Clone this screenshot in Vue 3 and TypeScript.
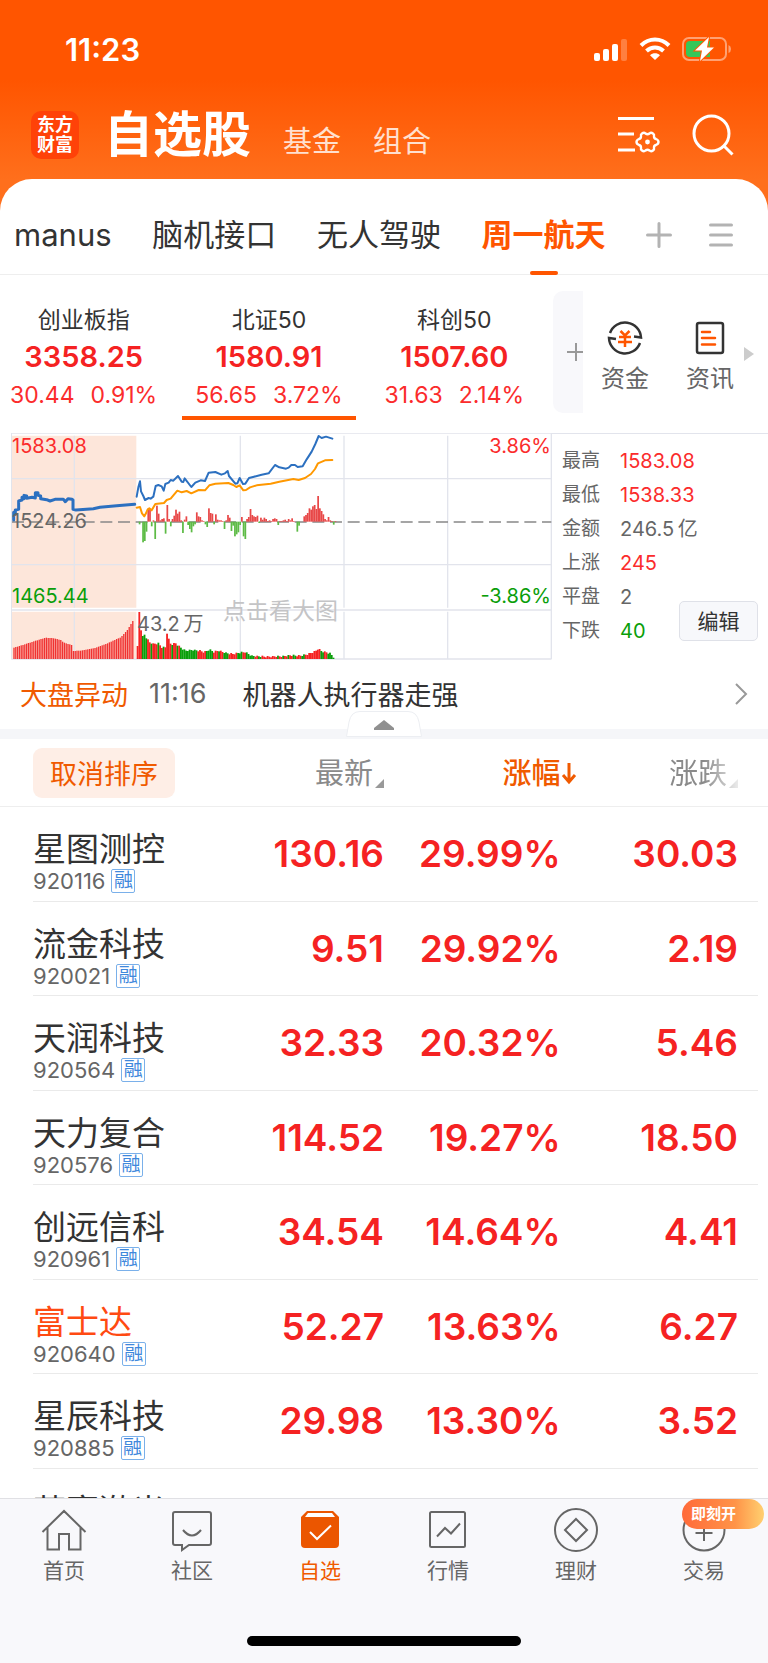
<script setup lang="ts">
import { computed, ref } from 'vue'

interface Stock { name: string; code: string; price: string; pct: string; diff: string; hot?: boolean }
type Point = [number, number]

const groups = ['manus', '脑机接口', '无人驾驶', '周一航天']
const activeGroup = ref('周一航天')

const indices = [
  { name: '创业板指', value: '3358.25', diff: '30.44', pct: '0.91%' },
  { name: '北证50', value: '1580.91', diff: '56.65', pct: '3.72%' },
  { name: '科创50', value: '1507.60', diff: '31.63', pct: '2.14%' },
]
const activeIndex = ref('北证50')

const stats = [
  { label: '最高', value: '1583.08', tone: 'up' },
  { label: '最低', value: '1538.33', tone: 'up' },
  { label: '金额', value: '246.5\u2009亿', tone: 'flat' },
  { label: '上涨', value: '245', tone: 'up' },
  { label: '平盘', value: '2', tone: 'flat' },
  { label: '下跌', value: '40', tone: 'down' },
]

const stocks: Stock[] = [
  { name: '星图测控', code: '920116', price: '130.16', pct: '29.99%', diff: '30.03' },
  { name: '流金科技', code: '920021', price: '9.51', pct: '29.92%', diff: '2.19' },
  { name: '天润科技', code: '920564', price: '32.33', pct: '20.32%', diff: '5.46' },
  { name: '天力复合', code: '920576', price: '114.52', pct: '19.27%', diff: '18.50' },
  { name: '创远信科', code: '920961', price: '34.54', pct: '14.64%', diff: '4.41' },
  { name: '富士达', code: '920640', price: '52.27', pct: '13.63%', diff: '6.27', hot: true },
  { name: '星辰科技', code: '920885', price: '29.98', pct: '13.30%', diff: '3.52' },
  { name: '莱赛激光', code: '', price: '', pct: '', diff: '' },
]

const tabs = ['首页', '社区', '自选', '行情', '理财', '交易']
const activeTab = ref('自选')

function sample(curve: Point[], x: number): number {
  for (let i = 1; i < curve.length; i++) {
    const [x0, y0] = curve[i - 1]
    const [x1, y1] = curve[i]
    if (x <= x1) return y0 + ((y1 - y0) * (x - x0)) / (x1 - x0)
  }
  return curve[curve.length - 1][1]
}

const auctionVolume: Point[] = [[40, 683], [75, 672], [100, 664], [135, 653], [160, 655], [180, 660], [190, 668], [213, 675], [217, 693], [240, 692], [280, 685], [320, 670], [360, 652], [380, 630], [397, 602]]
const tradeVolume: Point[] = [[412, 678], [417, 572], [422, 625], [428, 650], [433, 642], [437, 650], [448, 665], [460, 670], [475, 668], [485, 680], [496, 680], [500, 635], [505, 655], [512, 672], [526, 668], [540, 680], [555, 690], [575, 688], [600, 690], [612, 695], [628, 686], [640, 694], [655, 690], [680, 698], [700, 700], [720, 696], [735, 694], [745, 700], [755, 706], [800, 708], [845, 707], [870, 704], [900, 705], [925, 700], [945, 692], [954, 684], [965, 692], [990, 698], [1002, 712]]
const tradeColors = 'rrrgggrrgrrrgrrgrrrrgrrgrggggggggggrrrrrggggrrrgrrgggrrrrrgggrrgggggrrggrrrrrrrrrgrrgrrgrrggrrrggrrrrrrrrrggrrggggggg'

const auctionBars = computed(() =>
  Array.from({ length: 67 }, (_, i) => {
    const x = 40 + i * 5.4
    const y = Math.round(sample(auctionVolume, x))
    return { x, y, h: 717 - y }
  }),
)
const tradeBars = computed(() =>
  Array.from({ length: 114 }, (_, i) => {
    const x = 412 + i * 5.2
    const y = Math.round(sample(tradeVolume, x) + (i % 3) * 2)
    return { x: x - 2, y, h: 717 - y, up: tradeColors[i] === 'r' }
  }),
)

const momentum = [
  0, -8, 0, -62, -58, -30, 40, 38, -14, 4, -52, 48, 24, 4, 8, 10, -36, 50, 8, -14, 8, 18, 36, 24, 30, 4, -34, 6, 16, -10,
  -22, -32, -14, -8, 28, 16, 14, 4, 2, -8, -16, 40, 26, 24, -8, 22, 6, 4, 4, 2, -22, 4, 20, 12, -28, -12, -44, -38, -32,
  -10, 14, -44, -52, 8, 14, 38, 20, 16, 14, 18, -4, 12, 6, 12, 8, 2, 4, 2, 8, 10, 8, -10, 2, 2, 4, 6, 2, 8, 4, 10, 2, 0,
  -30, -12, 0, 0, 16, 20, 26, 40, 36, 46, 50, 38, 77, 40, 32, 22, 8, 4, 14, 4, 2, -9, 2,
]
</script>

<template>
  <div class="app">
    <header class="top">
      <div class="status">
        <span class="clock">11:23</span>
        <span class="status-icons">
          <svg width="34" height="24" viewBox="0 0 34 24" fill="#fff" aria-hidden="true">
            <rect x="0" y="16" width="6" height="8" rx="2" /><rect x="9" y="12" width="6" height="12" rx="2" />
            <rect x="18" y="7" width="6" height="17" rx="2" /><rect x="27" y="2" width="6" height="22" rx="2" opacity=".25" />
          </svg>
          <svg width="32" height="24" viewBox="0 0 32 24" fill="none" stroke="#fff" stroke-width="4" aria-hidden="true">
            <path d="M2 8.5C10 .5 22 .5 30 8.5M7.500 14C12.500 9.300 19.500 9.300 24.500 14" /><path d="M11 18.200C14 15.700 18 15.700 21 18.200L16 23Z" fill="#fff" stroke="none" />
          </svg>
          <svg width="50" height="26" viewBox="0 0 50 26" fill="none" aria-hidden="true">
            <rect x="1" y="2" width="43" height="22" rx="6" stroke="#fff" stroke-opacity=".45" stroke-width="2" />
            <path d="M46.500 9Q49 10 49 13Q49 16 46.500 17Z" fill="#fff" fill-opacity=".45" />
            <path d="M8 5H28V21H8Q4 21 4 17V9Q4 5 8 5Z" fill="#35c759" />
            <path d="M27 1L13 14.500H20L18 25L32 11.500H25Z" fill="#fff" stroke="#ff5a04" stroke-width="2" paint-order="stroke" />
          </svg>
        </span>
      </div>
      <div class="titlebar">
        <div class="logo"><span>东方</span><span>财富</span></div>
        <nav class="sections">
          <h1>自选股</h1>
          <a href="#fund">基金</a>
          <a href="#portfolio">组合</a>
        </nav>
        <button class="icon-btn" aria-label="设置">
          <svg width="42" height="40" viewBox="0 0 42 40" fill="none" stroke="#fff" stroke-width="3">
            <path d="M0 3.500H36M0 19H16M0 35H17" />
            <path d="M24 18.500Q26 17 27.500 18.500Q29.500 20 31.500 18.500Q33 17 35 18.500Q36.500 19.500 36 21.500Q36 23.500 38 24Q40.500 25 40.500 27Q40.500 29 38 30Q36 30.500 36 32.500Q36.500 34.500 35 35.500Q33 37 31.500 35.500Q29.500 34 27.500 35.500Q26 37 24 35.500Q22.500 34.500 23 32.500Q23 30.500 21 30Q18.500 29 18.500 27Q18.500 25 21 24Q23 23.500 23 21.500Q22.500 19.500 24 18.500Z" stroke-width="2.400" />
            <circle cx="29.500" cy="27" r="2.400" fill="#fff" stroke="none" />
          </svg>
        </button>
        <button class="icon-btn" aria-label="搜索">
          <svg width="42" height="42" viewBox="0 0 42 42" fill="none" stroke="#fff" stroke-width="3">
            <circle cx="19.500" cy="19.500" r="17.500" /><path d="M32 32L40.500 40.500" />
          </svg>
        </button>
      </div>
    </header>

    <main class="panel">
      <nav class="groups">
        <button v-for="g in groups" :key="g" class="group" :class="{ active: g === activeGroup }" @click="activeGroup = g">{{ g }}</button>
        <button class="group-tool" aria-label="添加分组">
          <svg width="26" height="26" viewBox="0 0 26 26" stroke="#b3b3b3" stroke-width="3" stroke-linecap="round"><path d="M1.500 13H24.500M13 1.500V24.500" /></svg>
        </button>
        <button class="group-tool" aria-label="分组列表">
          <svg width="24" height="26" viewBox="0 0 24 26" stroke="#b3b3b3" stroke-width="3" stroke-linecap="round"><path d="M1.500 3H22.500M1.500 13H22.500M1.500 23H22.500" /></svg>
        </button>
      </nav>

      <section class="indices">
        <div class="index-strip">
          <button v-for="i in indices" :key="i.name" class="index" :class="{ active: i.name === activeIndex }" @click="activeIndex = i.name">
            <span class="index-name">{{ i.name }}</span>
            <strong>{{ i.value }}</strong>
            <span class="index-change"><span>{{ i.diff }}</span><span>{{ i.pct }}</span></span>
          </button>
          <button class="index-add" aria-label="添加指数">
            <svg width="16" height="20" viewBox="0 0 16 20" stroke="#999" stroke-width="2"><path d="M0 10H18M9 1V19" /></svg>
          </button>
        </div>
        <a class="quick" href="#capital">
          <svg width="36" height="36" viewBox="0 0 36 36" fill="none" stroke="#333" stroke-width="2.500">
            <path d="M3 13A16 16 0 0 1 34 17.500L27 16.500M33 23A16 16 0 0 1 2 18L9 19" />
            <path d="M13.500 11L18 15.500L22.500 11M12 17H24M11 22H25M18 15.500V27" stroke="#ff5500" />
          </svg>
          <span>资金</span>
        </a>
        <a class="quick" href="#news">
          <svg width="30" height="36" viewBox="0 0 30 36" fill="none" stroke="#333" stroke-width="2.500">
            <rect x="2" y="3" width="26" height="30" rx="2" />
            <path d="M7 12H15M7 18H20M7 24.500H20" stroke="#ff5500" stroke-linecap="round" />
          </svg>
          <span>资讯</span>
        </a>
        <svg class="more" width="10" height="14" viewBox="0 0 10 14" fill="#ccc" aria-hidden="true"><path d="M0 0L10 7L0 14Z" /></svg>
      </section>

      <section class="market">
        <svg class="chart" viewBox="0 0 541 227" role="img" aria-label="北证50 分时图">
          <g transform="translate(-11 -13) scale(.333333)">
            <path d="M36 47H409V563H36ZM36 575H409V716H36Z" fill="#fde6da" />
            <path d="M34 39V718M223 47V563M223 575V716M721 47V563M721 575V716M1032 47V563M1032 575V716M1343 47V563M1343 575V716M1654 39V718M34 176H1654M34 434H1654M34 570H1654M34 717H1654M34 39H1654" fill="none" stroke="#e2e4ec" stroke-width="4" />
            <path d="M36 306H1654" stroke="#888" stroke-width="4" stroke-dasharray="36 17" />
            <rect v-for="(b, i) in auctionBars" :key="'a' + i" :x="b.x" :y="b.y" width="4" :height="b.h" fill="#f03232" />
            <rect v-for="(b, i) in tradeBars" :key="'t' + i" :x="b.x" :y="b.y" width="5.500" :height="b.h" :fill="b.up ? '#f52222' : '#0a9e0a'" />
            <rect v-for="(m, i) in momentum" :key="'m' + i" :x="411 + i * 5.200" :y="m > 0 ? 305 - m : 305" width="5.200" :height="Math.abs(m)" :fill="m > 0 ? '#e84848' : '#5dbb46'" />
            <g fill="none" stroke-linejoin="round" stroke-linecap="round">
              <path stroke="#2c70c0" stroke-width="9" d="M41 300V277L46 283V270L56 268V243L66 240V232L72 236V226L80 228V235L96 232L106 234V218L114 218V226L122 228V236L140 239L150 243L165 238L190 238L196 245L204 236L216 238L219 240V268L228 270L280 266L300 262L350 257L404 253" />
              <path stroke="#2c70c0" stroke-width="6" d="M410 230L415 202L420 184L423 214L430 228L435 240L446 234L452 236L460 230L467 198L475 195L485 199L491 212L496 192L506 188L512 180L520 182L534 168L545 185L550 186L554 175L574 201L586 188L602 181L615 183L626 158L646 156L664 164L675 160L683 153L687 168L706 191L712 190L719 174L729 192L736 191L747 174L762 170L785 164L806 160L825 135L838 142L858 146L866 143L874 135L885 135L893 141L908 139L920 118L935 95L946 72L956 48L965 54L978 50L997 56" />
              <path stroke="#ff9800" stroke-width="6" d="M410 263L420 261L426 280L433 289L438 280L442 270L448 265L455 271L466 252L492 249L500 240L512 236L532 212L545 217L560 213L574 220L596 210L615 211L628 196L646 191L685 189L700 195L709 201L719 196L730 211L738 210L750 202L770 196L812 191L838 185L880 177L896 180L915 174L933 162L945 147L954 130L975 121L997 120" />
            </g>
          </g>
          <text x="1" y="20" class="up">1583.08</text>
          <text x="1" y="95" class="flat">1524.26</text>
          <text x="1" y="170" class="down">1465.44</text>
          <text x="540" y="20" text-anchor="end" class="up">3.86%</text>
          <text x="540" y="170" text-anchor="end" class="down">-3.86%</text>
          <text x="126" y="198" class="flat">43.2&#8201;万</text>
          <text x="212" y="186" class="hint">点击看大图</text>
        </svg>
        <aside class="stats">
          <dl>
            <div v-for="s in stats" :key="s.label"><dt>{{ s.label }}</dt><dd :class="s.tone">{{ s.value }}</dd></div>
          </dl>
          <button class="edit">编辑</button>
        </aside>
      </section>

      <a class="news" href="#move">
        <span class="news-tag">大盘异动</span>
        <time>11:16</time>
        <span class="news-title">机器人执行器走强</span>
        <svg width="14" height="24" viewBox="0 0 14 24" fill="none" stroke="#999" stroke-width="2"><path d="M2 2L12 12L2 22" /></svg>
      </a>
      <div class="divider">
        <button class="collapse" aria-label="收起">
          <svg width="76" height="26" viewBox="0 0 76 26"><path d="M0.500 25.500L3 11Q5 .5 14 .5H62Q71 .5 73 11L75.500 25.500Z" fill="#fff" stroke="#eceef2" /><path d="M38 9L48 17V19H28V17Z" fill="#909090" /></svg>
        </button>
      </div>

      <section class="list">
        <table>
          <colgroup><col class="c-name"><col class="c-price"><col class="c-pct"><col class="c-diff"></colgroup>
          <thead>
            <tr>
              <th class="name"><button class="reset">取消排序</button></th>
              <th><button class="sort">最新<svg width="9" height="9" viewBox="0 0 9 9" fill="#999"><path d="M9 0V9H0Z" /></svg></button></th>
              <th><button class="sort on">涨幅<svg width="16" height="24" viewBox="0 0 16 24" fill="none" stroke="#f05a00" stroke-width="3"><path d="M8 1V20M2 13L8 20L14 13" /></svg></button></th>
              <th><button class="sort fade">涨跌<svg width="9" height="9" viewBox="0 0 9 9" fill="#999"><path d="M9 0V9H0Z" /></svg></button></th>
            </tr>
          </thead>
          <tbody>
            <tr v-for="s in stocks" :key="s.name">
              <td class="name">
                <div class="stock" :class="{ hot: s.hot }">{{ s.name }}</div>
                <div v-if="s.code" class="code">{{ s.code }}<span class="margin">融</span></div>
              </td>
              <td>{{ s.price }}</td>
              <td>{{ s.pct }}</td>
              <td>{{ s.diff }}</td>
            </tr>
          </tbody>
        </table>
      </section>
    </main>

    <footer class="bottom">
      <nav class="tabbar">
        <a v-for="t in tabs" :key="t" :href="'#' + t" :class="{ active: t === activeTab }" @click="activeTab = t">
          <svg width="46" height="46" viewBox="0 0 46 46" fill="none" stroke="#666" stroke-width="2" aria-hidden="true">
            <path v-if="t === '首页'" d="M1.500 24L23 3L44.500 24M6.500 19.500V41.500H18V26H28V41.500H39.500V19.500" />
            <g v-else-if="t === '社区'"><path d="M6 4H40Q42 4 42 6V35Q42 37 40 37H20L13 42V37H6Q4 37 4 35V6Q4 4 6 4Z" /><path d="M14 22Q23 33 32 22" /></g>
            <g v-else-if="t === '自选'"><path d="M10 3H36L42 9V36Q42 40 38 40H8Q4 40 4 36V9Z" fill="#eb5600" stroke="none" /><path d="M11 5H35L38 9H8Z" fill="#fff" stroke="none" /><path d="M13 24L20 31L34 17.500" stroke="#fff" /></g>
            <g v-else-if="t === '行情'"><rect x="5" y="4" width="35" height="35" rx="1.500" /><path d="M12 28.500L20 20L26 25.500L35 15.500" /></g>
            <g v-else-if="t === '理财'"><circle cx="23" cy="22" r="21" /><path d="M23 11L34 22L23 33L12 22Z" /></g>
            <g v-else><circle cx="23" cy="22" r="20.500" /><path d="M14.500 25H31.500M23 16V33" /></g>
          </svg>
          <span>{{ t }}</span>
          <em v-if="t === '交易'" class="promo">即刻开</em>
        </a>
      </nav>
      <div class="home-bar"></div>
    </footer>
  </div>
</template>

<style>
body { background: #fff; }
</style>

<style scoped>
.app { display: flex; flex-direction: column; height: 100vh; overflow: hidden; background: #fff; color: #333; font-family: Inter, "Noto Sans CJK SC", sans-serif; }
button { border: 0; padding: 0; background: none; font: inherit; color: inherit; cursor: pointer; }
a { color: inherit; text-decoration: none; }
svg { display: block; flex: none; }
.up { color: #fb2c2c; fill: #fb2c2c; }
.down { color: #0a9e0a; fill: #0a9e0a; }
.flat { color: #666; fill: #666; }

.top { height: 212px; flex: none; box-sizing: border-box; background: linear-gradient(#ff5500 80px, #ff6f1c 180px); color: #fff; }
.status { display: flex; justify-content: space-between; align-items: center; height: 98px; padding: 0 36px 0 65px; }
.clock { font-size: 31px; font-weight: 600; }
.status-icons { display: flex; align-items: center; gap: 11px; }
.titlebar { display: flex; align-items: center; height: 74px; padding: 0 34px 0 31px; }
.logo { display: flex; flex-direction: column; justify-content: center; align-items: center; width: 48px; height: 48px; border-radius: 10px; background: #ff4208; font-size: 18px; line-height: 20px; font-weight: 700; }
.sections { display: flex; align-items: last baseline; flex: 1; gap: 32px; margin-left: 25px; padding-top: 6px; line-height: 56px; font-size: 29px; color: #ffe0d0; }
.sections h1 { margin: 0; font-size: 49px; font-weight: 600; color: #fff; }
.icon-btn + .icon-btn { margin-left: 32px; }

.panel { display: flex; flex-direction: column; flex: 1; min-height: 0; margin-top: -33px; border-radius: 32px 32px 0 0; background: #fff; overflow: hidden; }
.groups { display: flex; flex: none; height: 95px; padding: 0 35px 0 14px; border-bottom: 1px solid #eee; align-items: stretch; justify-content: space-between; }
.group { position: relative; display: flex; align-items: flex-start; height: 95px; box-sizing: border-box; padding-top: 36px; font-size: 31px; line-height: 40px; white-space: nowrap; }
.group.active { color: #ff5500; font-weight: 600; }
.group.active::after { content: ""; position: absolute; bottom: -1px; left: 50%; width: 28px; height: 4px; margin-left: -14px; border-radius: 2px; background: #ff5500; }
.group-tool { padding-top: 17px; }
.group-tool + .group-tool { margin-left: -4px; }

.indices { display: flex; align-items: center; height: 158px; flex: none; }
.index-strip { display: flex; flex: 1; min-width: 0; height: 100%; align-items: center; margin-left: -9px; }
.index { position: relative; flex: 1; height: 100%; display: flex; flex-direction: column; align-items: center; padding-top: 28px; box-sizing: border-box; white-space: nowrap; color: #fb2c2c; font-size: 23px; line-height: 36px; }
.index-name { color: #333; line-height: 34px; }
.index strong { font-size: 29px; line-height: 40px; font-weight: 600; color: #f52222; }
.index-change { display: flex; gap: 16px; }
.index.active::after { content: ""; position: absolute; left: 6px; right: 6px; bottom: 13px; height: 4px; background: #ff5500; }
.index-add { display: flex; align-items: center; justify-content: flex-end; width: 30px; height: 122px; margin: 0 18px 4px 6px; border-radius: 10px 0 0 10px; background: #f8f8fb; }
.quick { display: flex; flex-direction: column; align-items: center; width: 48px; margin-right: 37px; padding-top: 8px; font-size: 24px; line-height: 36px; gap: 5px; color: #666; white-space: nowrap; }
.quick + .quick { margin-right: 10px; }
.more { margin-right: 14px; }

.market { display: flex; flex: none; align-items: flex-start; padding-left: 11px; }
.chart { flex: 541 1 0; min-width: 0; font-size: 20px; }
.chart .hint { font-size: 23px; fill: #c4c4c6; }
.stats { position: relative; flex: 216 1 0; align-self: stretch; border-top: 1px solid #e2e4ec; }
.stats dl { margin: 0; padding: 10px 0 0 10px; }
.stats dl div { display: flex; gap: 20px; font-size: 19px; line-height: 34px; white-space: nowrap; }
.stats dt { width: 38px; color: #666; }
.stats dd { margin: 0; font-size: 20px; }
.edit { position: absolute; right: 10px; bottom: 19px; width: 79px; height: 40px; padding-bottom: 3px; border: 1px solid #dfe1e8; border-radius: 5px; background: #f7f8fb; font-size: 21px; }

.news { display: flex; align-items: center; flex: none; height: 67px; padding: 0 20px 2px; font-size: 27px; white-space: nowrap; }
.news-tag { color: #f05a00; }
.news time { margin: 0 36px 0 21px; font-size: 27px; color: #666; }
.news-title { flex: 1; }
.divider { position: relative; flex: none; height: 10px; background: #f5f6f9; }
.collapse { position: absolute; left: 50%; bottom: 2px; width: 76px; margin-left: -38px; }

.list { flex: 1; min-height: 0; overflow: hidden; }
table { width: 100%; table-layout: fixed; border-collapse: collapse; text-align: right; }
.c-name { width: 25%; } .c-price { width: 25%; } .c-pct { width: 23%; } .c-diff { width: 27%; }
th, td { padding: 0; white-space: nowrap; }
th { height: 67px; font-size: 29px; font-weight: 400; border-bottom: 1px solid #eee; vertical-align: middle; }
th:last-child, td:last-child { padding-right: 30px; }
.name { text-align: left; padding-left: 33px; }
.reset { display: block; width: 142px; height: 50px; border-radius: 9px; background: #feeee6; color: #f05a00; font-size: 27px; }
.sort { display: inline-flex; align-items: center; gap: 2px; padding-top: 2px; color: #8a8a8a; line-height: 40px; }
.sort svg { align-self: flex-end; margin-bottom: 6px; }
.sort.on { color: #f05a00; font-weight: 500; gap: 0; }
.sort.on svg { align-self: center; margin: 0 -16px 0 0; }
.sort.fade { -webkit-mask-image: linear-gradient(90deg, #000 50%, rgba(0, 0, 0, .2)); mask-image: linear-gradient(90deg, #000 50%, rgba(0, 0, 0, .2)); }
tbody tr { height: 94px; background: linear-gradient(#eaeaea, #eaeaea) 33px 100% / calc(100% - 43px) 1px no-repeat; }
tbody tr:nth-child(odd) { height: 95px; }
td { color: #f52222; font-size: 37px; font-weight: 600; vertical-align: top; padding-top: 23px; line-height: 48px; }
td.name { padding-top: 22px; font-weight: 400; }
.stock { color: #333; font-size: 33px; line-height: 40px; }
.stock.hot { color: #ff4a12; }
.code { display: flex; align-items: center; gap: 6px; color: #666; font-size: 22px; line-height: 24px; }
.margin { box-sizing: border-box; width: 24px; height: 24px; border: 1px solid #7ab0ea; border-radius: 2px; color: #3f88dc; font-size: 19px; line-height: 21px; text-align: center; }

.bottom { flex: none; height: 164px; border-top: 1px solid #e0e0e4; background: #f8f8fb; }
.tabbar { display: flex; }
.tabbar a { position: relative; flex: 1; display: flex; flex-direction: column; align-items: center; padding-top: 9px; font-size: 21px; line-height: 30px; color: #666; gap: 2px; }
.tabbar a.active { color: #f05a00; }
.promo { position: absolute; top: 0; right: 4px; width: 82px; height: 30px; box-sizing: border-box; padding-left: 9px; border-radius: 15px; background: linear-gradient(90deg, #ff6a3a, #ff9448 65%, #ffd070); color: #fff; font-size: 15px; font-style: normal; font-weight: 700; line-height: 30px; }
.home-bar { width: 274px; height: 10px; margin: 50px auto 0; border-radius: 5px; background: #000; }
</style>
